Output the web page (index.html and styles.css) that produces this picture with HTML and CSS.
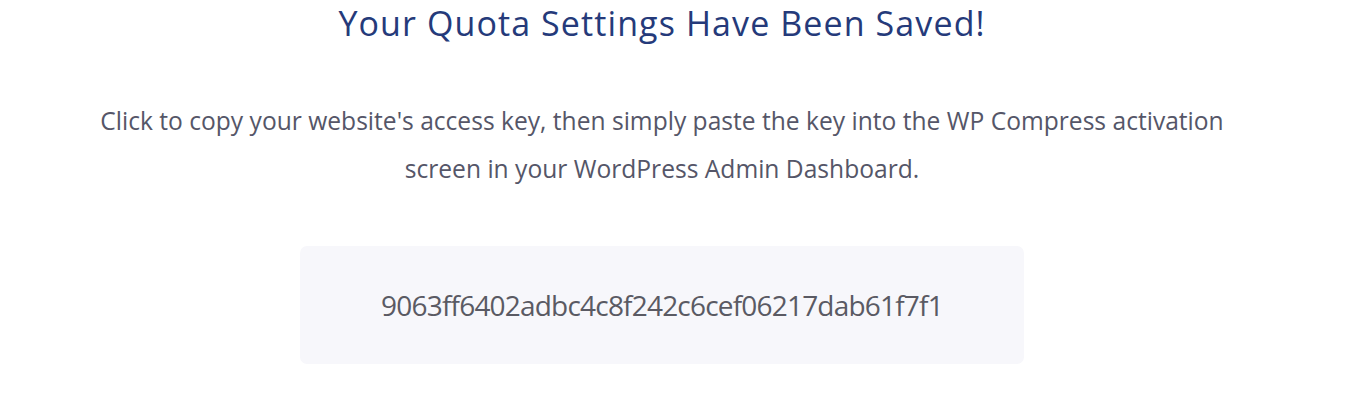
FILE: index.html
```html
<!DOCTYPE html>
<html>
<head>
<meta charset="utf-8">
<link rel="stylesheet" href="styles.css">
</head>
<body>
<main class="page">
  <h1 class="title">Your Quota Settings Have Been Saved!</h1>
  <p class="lead">Click to copy your website's access key, then simply paste the key into the WP Compress activation screen in your WordPress Admin Dashboard.</p>
  <div class="key-box">
    <span class="key">9063ff6402adbc4c8f242c6cef06217dab61f7f1</span>
  </div>
</main>
</body>
</html>
```
FILE: styles.css
```css
html, body {
  margin: 0;
  padding: 0;
  background: #ffffff;
}
.page {
  width: 1324px;
  display: flex;
  flex-direction: column;
  align-items: center;
  font-family: "Open Sans", "Liberation Sans", sans-serif;
}
.title {
  margin: 0;
  font-size: 34px;
  line-height: 46px;
  font-weight: 500;
  letter-spacing: 1.1px;
  color: #253a7a;
}
.lead {
  margin: 51px 0 0;
  width: 1160px;
  text-align: center;
  font-size: 24.6px;
  line-height: 48px;
  color: #555668;
}
.key-box {
  margin-top: 53px;
  width: 724px;
  height: 118px;
  border-radius: 7px;
  background: #f7f7fb;
  display: flex;
  align-items: center;
  justify-content: center;
}
.key {
  font-size: 28px;
  font-weight: 500;
  letter-spacing: -0.8px;
  color: #5a5a63;
}
```
